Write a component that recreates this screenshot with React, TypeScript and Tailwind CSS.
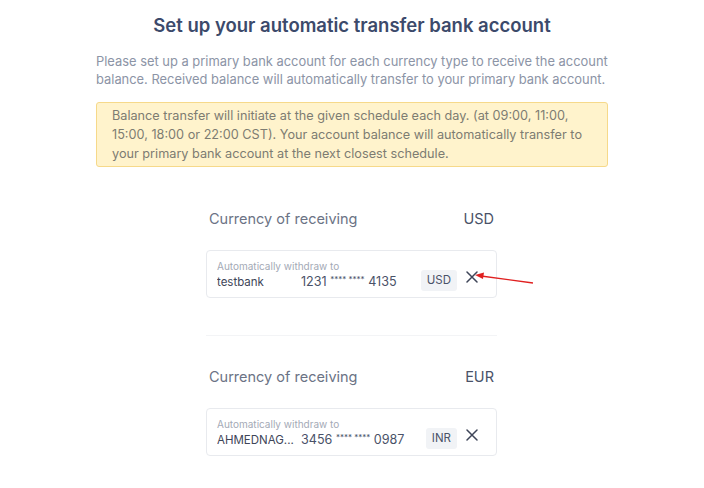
const accounts = [
  { currency: 'USD', bank: 'testbank', first: '1231', last: '4135', badge: 'USD', arrow: true },
  { currency: 'EUR', bank: 'AHMEDNAG...', first: '3456', last: '0987', badge: 'INR', arrow: false },
];

function AccountSection({ item }: { item: (typeof accounts)[number] }) {
  return (
    <div>
      <div className="flex items-center justify-between px-[3px] text-[14.5px] leading-5">
        <span className="text-[#6b7385]">Currency of receiving</span>
        <span className="text-[#4a5268]">{item.currency}</span>
      </div>
      <div className="relative mt-[21px] h-[48px] rounded-[4px] border border-[#e8eaee] bg-white pl-[10px] pr-[18px] pt-[9px]">
        <div className="text-[10px] leading-[13px] text-[#a4aab6]">Automatically withdraw to</div>
        <div className="flex items-center">
          <span className="w-[84px] truncate text-[11.5px] text-[#3e4558]">{item.bank}</span>
          <span className="text-[12.6px] text-[#4a5268]">
            {item.first} <sup className="text-[8px]">**** ****</sup> {item.last}
          </span>
          <span className="ml-auto -mt-[4px] rounded-[3px] bg-[#f1f3f6] px-[6px] py-[2px] text-[11.5px] leading-[17px] text-[#4a5268]">
            {item.badge}
          </span>
          <svg className="ml-[9px] -mt-[10px]" width="12" height="12" viewBox="0 0 12 12">
            <path d="M1 1 L11 11 M11 1 L1 11" stroke="#3e4558" strokeWidth="1.5" strokeLinecap="round" />
          </svg>
        </div>
        {item.arrow && (
          <svg className="absolute left-[266px] top-[19px]" width="64" height="16" viewBox="0 0 64 16">
            <line x1="60" y1="13" x2="8" y2="6" stroke="#e02020" strokeWidth="1.3" />
            <polygon points="2,5 11,2.5 10,9" fill="#e02020" />
          </svg>
        )}
      </div>
    </div>
  );
}

export default function App() {
  return (
    <div className="h-[488px] w-[704px] bg-white" style={{ fontFamily: 'Inter, "Open Sans", sans-serif' }}>
      <div className="flex flex-col items-center pt-[13px]">
        <h1 className="text-[18.5px] font-semibold leading-6 text-[#3c4a6b]">Set up your automatic transfer bank account</h1>
        <p className="mt-[16px] w-[512px] text-[12.9px] leading-[18px] text-[#8c94a6]">
          Please set up a primary bank account for each currency type to receive the account
          <br />
          balance. Received balance will automatically transfer to your primary bank account.
        </p>
        <div className="mt-[13px] w-[512px] rounded-[3px] border border-[#f6d98a] bg-[#fff3cc] px-[15px] py-[3px] text-[12.7px] leading-[19px] text-[#7d7c72]">
          Balance transfer will initiate at the given schedule each day. (at 09:00, 11:00,
          <br />
          15:00, 18:00 or 22:00 CST). Your account balance will automatically transfer to
          <br />
          your primary bank account at the next closest schedule.
        </div>
        <div className="ml-[-1px] mt-[42px] w-[291px]">
          <AccountSection item={accounts[0]} />
          <div className="mt-[37px] h-px bg-[#f3f4f6]" />
          <div className="mt-[31px]">
            <AccountSection item={accounts[1]} />
          </div>
        </div>
      </div>
    </div>
  );
}
